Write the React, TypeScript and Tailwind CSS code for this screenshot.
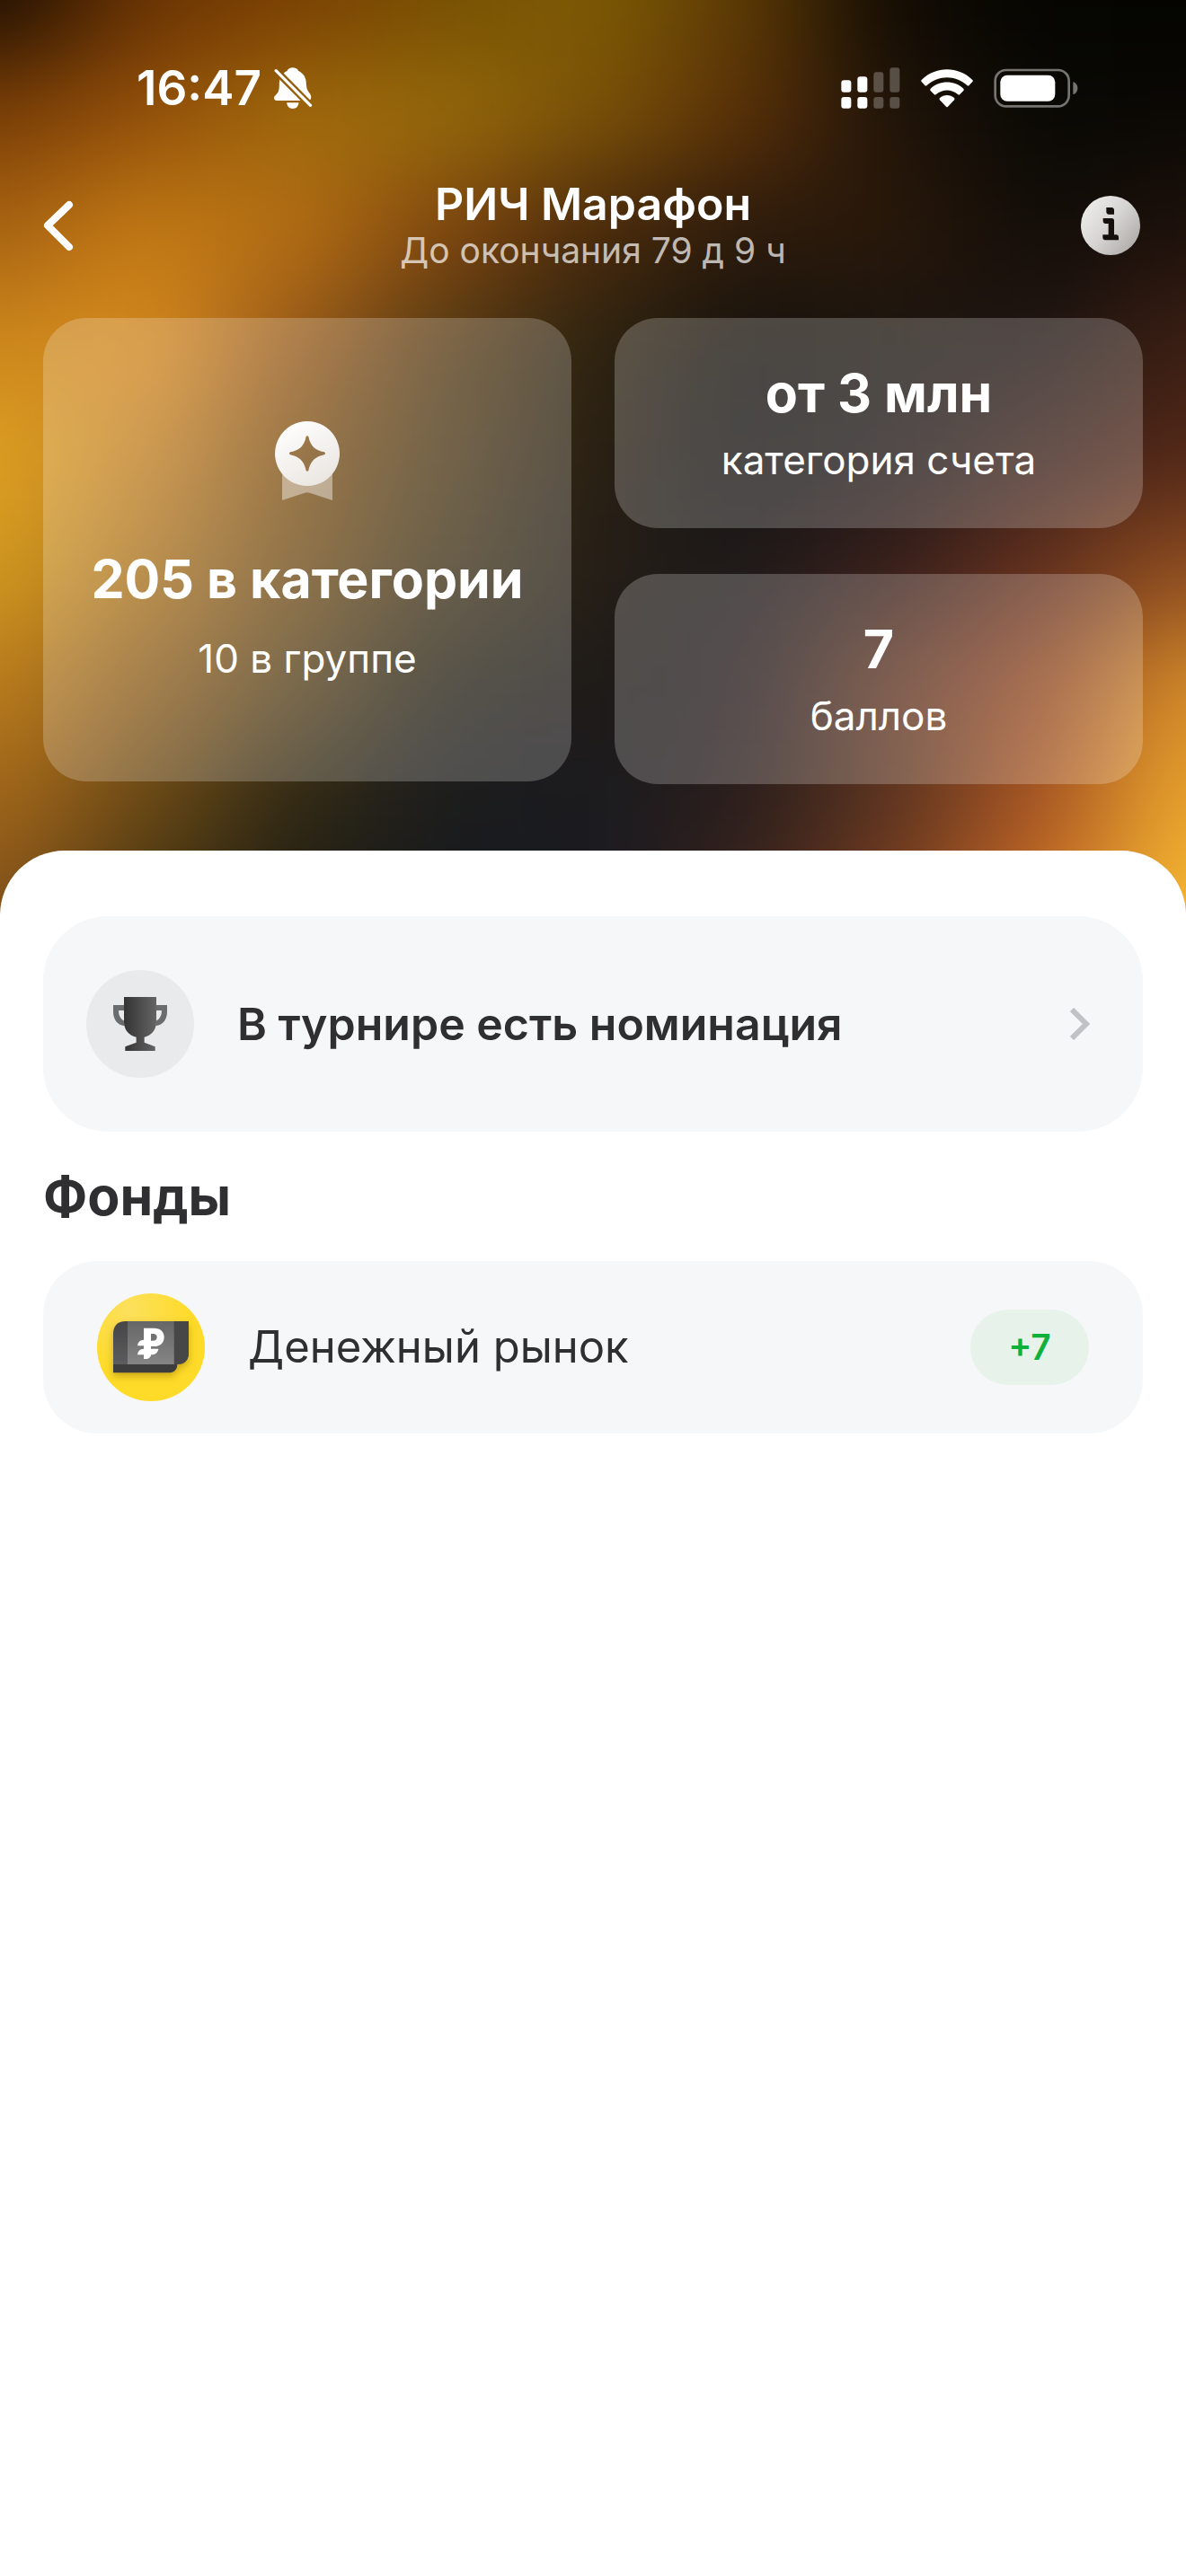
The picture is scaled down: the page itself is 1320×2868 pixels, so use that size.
const mesh = [
  ["#1f0f02", "#6a3303", "#7a4003", "#775003", "#7d5b04", "#5d3a05", "#120b03", "#050502", "#040401"],
  ["#7a3e06", "#94500a", "#a06a0c", "#956a0b", "#7c5208", "#5a3008", "#20140a", "#090904", "#0b0804"],
  ["#a86212", "#c27a14", "#b46e14", "#80460f", "#4b2a0c", "#2c1b0c", "#2a180a", "#120d09", "#1d110b"],
  ["#cc881c", "#d78a1f", "#96581a", "#543a14", "#2e2411", "#16120d", "#1b150f", "#1f1512", "#3c1f13"],
  ["#dea022", "#c07e22", "#7d4f14", "#4b3816", "#2a2014", "#151313", "#1e1817", "#3a201a", "#542818"],
  ["#d1981f", "#a8701d", "#704c18", "#3f3218", "#241e16", "#1e1a1a", "#381f1b", "#63301e", "#904e20"],
  ["#ba7c1c", "#8a5a1a", "#54401a", "#252116", "#1e1a18", "#241a1d", "#5f3420", "#904420", "#d48c2a"],
  ["#a0651a", "#684816", "#2f2814", "#1b1c1e", "#1a1b20", "#2a1e1c", "#5a3420", "#a85524", "#eaa42c"],
  ["#84521a", "#453310", "#1f1d12", "#17191c", "#191a1f", "#3a221c", "#7c3c1e", "#cc6e24", "#f6bc34"],
];

function Backdrop() {
  const last = mesh.length - 1;
  return (
    <svg
      className="absolute inset-0 -z-10 h-full w-full"
      viewBox="0 0 1320 1024"
      preserveAspectRatio="none"
      aria-hidden="true"
    >
      <defs>
        <filter id="soften" filterUnits="userSpaceOnUse" x="-300" y="-300" width="1920" height="1624" colorInterpolationFilters="sRGB">
          <feGaussianBlur stdDeviation="66 52" />
        </filter>
      </defs>
      <g filter="url(#soften)">
        {mesh.map((row, j) =>
          row.map((fill, i) => {
            // outer cells run past the edge so the blur never fades out
            const x = i === 0 ? -300 : i * 165 - 83;
            const y = j === 0 ? -300 : j * 128 - 64;
            const right = i === last ? 1620 : i * 165 + 84;
            const bottom = j === last ? 1324 : j * 128 + 65;
            return <rect key={`${i}-${j}`} x={x} y={y} width={right - x} height={bottom - y} fill={fill} />;
          })
        )}
      </g>
    </svg>
  );
}

function BellOff() {
  return (
    <svg className="h-[46px] w-[43px]" viewBox="524 45 128 138" fill="#fff" aria-label="Без звука">
      <defs>
        <mask id="bell-cut" maskUnits="userSpaceOnUse" x="500" y="30" width="180" height="170">
          <rect x="500" y="30" width="180" height="170" fill="#fff" />
          <path d="M520 46L655 182" stroke="#000" strokeWidth="24" />
        </mask>
      </defs>
      <g mask="url(#bell-cut)">
        <path d="M586 46C595 46 602 50 605 57C622 65 631 79 631 100C632 116 635 123 642 131C650 140 650 156 636 156H533C522 156 521 144 528 139C541 128 541 116 541 100C541 79 550 65 567 57C570 50 577 46 586 46Z" />
      </g>
      <path d="M566 163H606C605 176 597 183 586 183C575 183 567 176 566 163Z" />
      <path d="M530 56L645 172" stroke="#fff" strokeWidth="10" strokeLinecap="round" />
    </svg>
  );
}

function Signal() {
  return (
    <svg className="h-[46px] w-[66px]" viewBox="80 41 198 138" fill="#fff" aria-label="Сигнал">
      <rect x="81" y="84" width="33" height="40" rx="9" />
      <rect x="81" y="140" width="33" height="38" rx="9" />
      <rect x="135" y="72" width="33" height="52" rx="9" />
      <rect x="135" y="140" width="33" height="38" rx="9" />
      <g opacity="0.25">
        <rect x="189" y="57" width="33" height="67" rx="9" />
        <rect x="189" y="140" width="33" height="38" rx="9" />
        <rect x="243" y="42" width="33" height="82" rx="9" />
        <rect x="243" y="140" width="33" height="38" rx="9" />
      </g>
    </svg>
  );
}

function Wifi() {
  return (
    <svg className="h-[43px] w-[58px]" viewBox="344 44 174 129" fill="#fff" aria-label="Wi-Fi">
      <path d="M346 80C393 33 469 33 516 80Q519 83 516 86L505 98Q502 101 498 98C460 63 402 63 364 98Q360 101 357 98L346 86Q343 83 346 80Z" />
      <path d="M376 109C406 80 456 80 486 109Q489 113 486 116L474 128Q471 131 467 128C446 110 416 110 395 128Q391 131 388 128L376 116Q373 113 376 109Z" />
      <path d="M407 140C420 128 442 128 455 140Q458 143 455 147L434 169Q431 172 428 169L407 147Q404 143 407 140Z" />
    </svg>
  );
}

function Battery() {
  return (
    <svg className="h-[44px] w-[94px]" viewBox="584 43 282 132" aria-label="Батарея">
      <rect x="589" y="49" width="246" height="121" rx="36" fill="none" stroke="#757471" strokeWidth="8" />
      <rect x="606" y="66" width="183" height="87" rx="23" fill="#fff" />
      <path d="M849 89C869 93 869 126 849 130Z" fill="#757471" />
    </svg>
  );
}

function InfoIcon() {
  return (
    <svg className="h-[66px] w-[66px]" viewBox="69 57 198 198" aria-hidden="true">
      <defs>
        <linearGradient id="info" x1="0" y1="0.1" x2="1" y2="0.9">
          <stop offset="0" stopColor="#f1f0ef" />
          <stop offset="0.5" stopColor="#d6d4d2" />
          <stop offset="1" stopColor="#a8a5a2" />
        </linearGradient>
      </defs>
      <circle cx="168" cy="156" r="99" fill="url(#info)" />
      <g fill="#15100b">
        <path d="M154 96H172Q180 97 180 105V119H162Q154 118 154 110Z" />
        <path d="M143 132H172Q180 132 180 140V187H188Q195 188 195 195V205H150Q142 204 142 196V187H161V150H151Q143 149 143 141Z" />
      </g>
    </svg>
  );
}

function Medal() {
  return (
    <svg className="h-[88px] w-[72px]" viewBox="48 57 216 264" aria-hidden="true">
      <defs>
        <linearGradient id="medal" x1="0.2" y1="0" x2="0.8" y2="1">
          <stop offset="0" stopColor="#fff" />
          <stop offset="1" stopColor="#e9e4df" />
        </linearGradient>
      </defs>
      <path d="M72 228C110 285 202 285 240 228V321L164 296Q156 293 148 296L72 321Z" fill="#fff" opacity="0.42" />
      <path
        fillRule="evenodd"
        fill="url(#medal)"
        d="M156 57a108 108 0 1 0 .1 0ZM152 108Q156 103 160 108C166 139 182 155 213 160Q219 164 213 169C182 175 166 191 160 222Q156 227 152 222C146 191 130 175 99 169Q93 164 99 160C130 155 146 139 152 108Z"
      />
    </svg>
  );
}

function Trophy() {
  return (
    <svg className="h-[60px] w-[60px]" viewBox="138 150 180 180" aria-hidden="true">
      <defs>
        <linearGradient id="cup" x1="0" y1="0" x2="1" y2="0">
          <stop offset="0" stopColor="#343434" />
          <stop offset="1" stopColor="#646464" />
        </linearGradient>
      </defs>
      <path
        fill="#6b6c6d"
        d="M138 177H178V195H156C156 212 163 225 176 230V247C150 243 138 224 138 198ZM318 177H278V195H300C300 212 293 225 280 230V247C306 243 318 224 318 198Z"
      />
      <path
        fill="url(#cup)"
        d="M174 150H282V232C282 260 266 279 242 284V302L278 316V330H178V316L215 302V284C190 279 174 260 174 232Z"
      />
    </svg>
  );
}

function MoneyMarketLogo() {
  return (
    <svg className="h-[120px] w-[120px] shrink-0" viewBox="54 60 360 360" aria-hidden="true">
      <defs>
        <radialGradient id="coin" cx="0.3" cy="0.15" r="0.6">
          <stop offset="0" stopColor="#fce05c" />
          <stop offset="1" stopColor="#fedb28" />
        </radialGradient>
        <linearGradient id="note" x1="0" y1="0" x2="0" y2="1">
          <stop offset="0" stopColor="#666667" />
          <stop offset="1" stopColor="#858586" />
        </linearGradient>
        <linearGradient id="roll" x1="0" y1="0" x2="0" y2="1">
          <stop offset="0" stopColor="#464647" />
          <stop offset="1" stopColor="#5c5c5d" />
        </linearGradient>
        <filter id="shade" x="-20%" y="-20%" width="140%" height="150%">
          <feDropShadow dx="0" dy="12" stdDeviation="12" floodColor="#7a5a00" floodOpacity="0.4" />
        </filter>
      </defs>
      <circle cx="234" cy="240" r="180" fill="url(#coin)" />
      <g filter="url(#shade)">
        <path d="M108 200H322V296C322 314 312 325 292 325H108Z" fill="#3d3d3e" />
        <path d="M150 153H360V258C360 284 346 297 320 297H108V196C108 168 122 153 150 153Z" fill="url(#roll)" />
        <path d="M311 153H360V258C360 284 346 297 320 297H311Z" fill="#464647" />
      </g>
      <rect x="156" y="153" width="155" height="144" fill="url(#note)" />
      <path
        fill="#fff"
        fillRule="evenodd"
        d="M210 176H244C266 176 278 188 278 206C278 225 265 237 245 237H234V245H259C257 258 249 265 234 265V268C231 275 226 279 219 279H210V265H189C191 252 197 246 210 245V235H189C191 222 198 216 210 215ZM234 195V218H241C249 218 254 214 254 206C254 199 249 195 241 195Z"
      />
    </svg>
  );
}

function StatCard({ value, label }: { value: string; label: string }) {
  return (
    <div className="flex flex-col items-center gap-[10px] rounded-[48px] bg-white/22 py-12">
      <p className="text-[59px] leading-[72px] font-bold">{value}</p>
      <p className="text-[44px] leading-[56px]">{label}</p>
    </div>
  );
}

export default function App() {
  return (
    <div className="min-h-screen bg-white font-['Inter','Noto_Sans',sans-serif] text-[#2f2f31]">
      <header className="relative isolate overflow-hidden px-12 pt-[66px] pb-[146px] text-white">
        <Backdrop />

        <div className="flex h-16 items-center justify-between pr-[72px] pl-[104px]">
          <div className="flex items-center gap-[14px]">
            <time className="text-[53px] leading-[64px] font-semibold">16:47</time>
            <BellOff />
          </div>
          <div className="flex items-center gap-[23px]">
            <Signal />
            <Wifi />
            <Battery />
          </div>
        </div>

        <div className="mt-[69px] flex items-center justify-between">
          <button type="button" aria-label="Назад" className="w-[72px]">
            <svg className="h-[57px] w-[34px]" viewBox="0 0 34 57" fill="none" aria-hidden="true">
              <path d="M29 5L5 28L29 52" stroke="#fff" strokeWidth="8" strokeLinecap="round" strokeLinejoin="round" />
            </svg>
          </button>
          <div className="text-center">
            <h1 className="text-[50px] leading-[56px] font-semibold">РИЧ Марафон</h1>
            <p className="text-[39px] leading-[48px] text-white/70">До окончания 79 д 9 ч</p>
          </div>
          <button type="button" aria-label="Информация" className="flex w-[72px] justify-center">
            <InfoIcon />
          </button>
        </div>

        <div className="mt-[51px] grid grid-cols-2 items-start gap-12">
          <div className="flex flex-col items-center rounded-[48px] bg-white/22 pt-[115px] pb-[109px]">
            <Medal />
            <p className="mt-[52px] text-[59px] leading-[72px] font-bold">205 в категории</p>
            <p className="mt-6 text-[44px] leading-[56px]">10 в группе</p>
          </div>
          <div className="flex flex-col gap-[51px]">
            <StatCard value="от 3 млн" label="категория счета" />
            <StatCard value="7" label="баллов" />
          </div>
        </div>
      </header>

      <main className="relative -mt-[72px] rounded-t-[72px] bg-white px-12 pt-[73px] pb-12">
        <button type="button" className="flex w-full items-center rounded-[72px] bg-[#f5f7f9] py-[60px] pr-[59px] pl-12 text-left">
          <span className="flex h-[120px] w-[120px] items-center justify-center rounded-full bg-[#e9eaec]">
            <Trophy />
          </span>
          <span className="ml-12 flex-1 text-[50px] leading-[60px] font-semibold">В турнире есть номинация</span>
          <svg className="h-[36px] w-[22px]" viewBox="0 0 22 36" fill="none" aria-hidden="true">
            <path d="M2 2L18 18L2 34" stroke="#c0c2c5" strokeWidth="6" />
          </svg>
        </button>

        <h2 className="my-9 text-[59px] leading-[72px] font-bold">Фонды</h2>

        <a href="#fund" className="flex items-center rounded-[60px] bg-[#f5f7f9] px-[60px] py-9">
          <MoneyMarketLogo />
          <span className="ml-12 flex-1 text-[49px] leading-[60px]">Денежный рынок</span>
          <span className="flex h-[84px] w-[132px] items-center justify-center rounded-full bg-[#e7f3ea] text-[39px] leading-[48px] font-semibold text-[#10b13a]">
            +7
          </span>
        </a>
      </main>
    </div>
  );
}
